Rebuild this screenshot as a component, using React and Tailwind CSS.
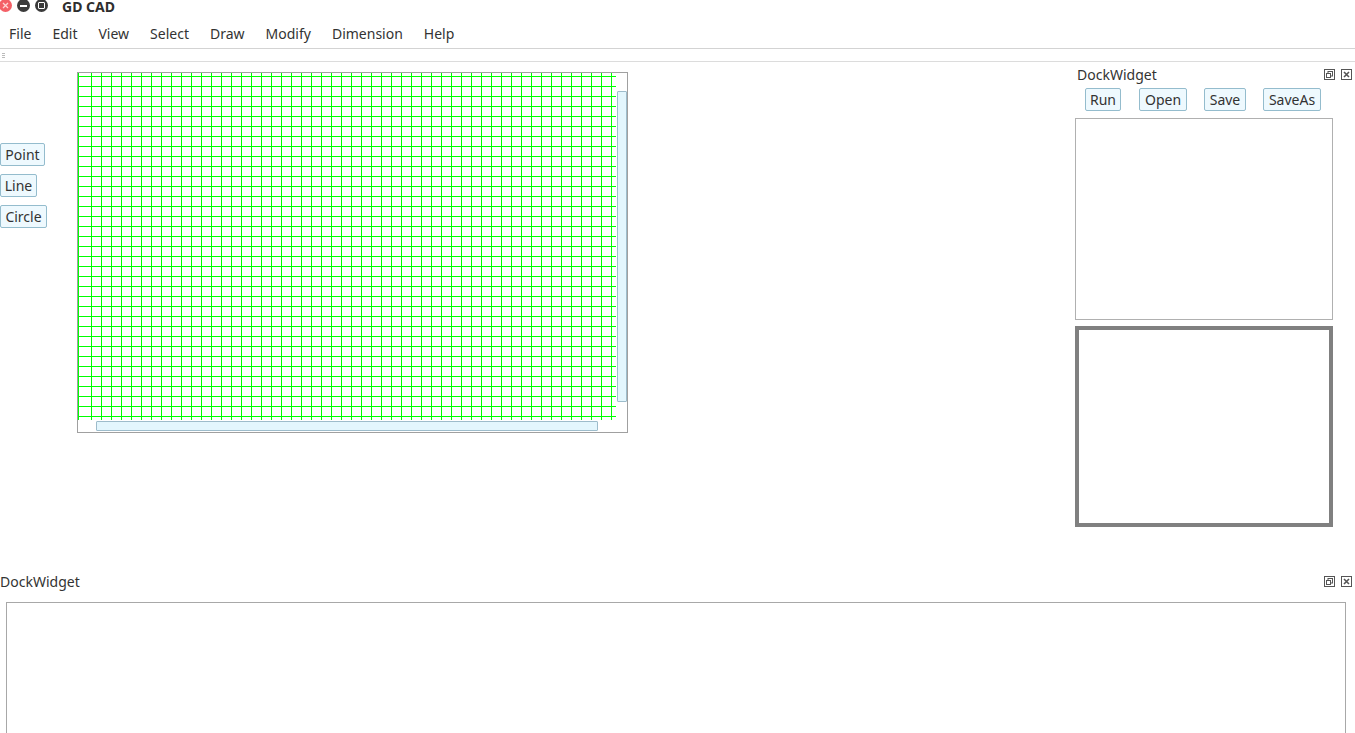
import React from 'react';

const menus = ['File', 'Edit', 'View', 'Select', 'Draw', 'Modify', 'Dimension', 'Help'];

const Btn = ({ children, className = '' }) => (
  <button className={`h-[23px] px-[3px] border border-[#94bccd] bg-[#eef9fe] rounded-[2px] text-[14px] leading-none text-[#333] ${className}`}>
    {children}
  </button>
);

const DockIcons = () => (
  <div className="flex gap-[6px] mr-[3px]">
    <svg width="11" height="11" viewBox="0 0 11 11" className="text-[#555]">
      <rect x="0.5" y="0.5" width="10" height="10" fill="none" stroke="currentColor" />
      <rect x="4" y="2.5" width="4.5" height="4.5" fill="none" stroke="currentColor" />
      <rect x="2.5" y="4.5" width="4" height="4" fill="white" stroke="currentColor" />
    </svg>
    <svg width="11" height="11" viewBox="0 0 11 11" className="text-[#555]">
      <rect x="0.5" y="0.5" width="10" height="10" fill="none" stroke="currentColor" />
      <path d="M3 3 L8 8 M8 3 L3 8" stroke="currentColor" strokeWidth="1.6" />
    </svg>
  </div>
);

// scene grid, first column sits against the frame, the rest every 10px
const Grid = () => {
  const cols = [0];
  for (let x = 13; x <= 533; x += 10) cols.push(x);
  const rows = [];
  for (let y = 3; y <= 343; y += 10) rows.push(y);
  return (
    <svg width="540" height="350" className="absolute left-0 top-0" shapeRendering="crispEdges">
      {cols.map((x) => (
        <line key={'c' + x} x1={x + 0.5} y1="0" x2={x + 0.5} y2="347" stroke="#00ff00" strokeWidth="1" />
      ))}
      {rows.map((y) => (
        <line key={'r' + y} x1="0" y1={y + 0.5} x2="538" y2={y + 0.5} stroke="#00ff00" strokeWidth="1" />
      ))}
    </svg>
  );
};

export default function App() {
  return (
    <div className="w-[1355px] h-[733px] overflow-hidden bg-white flex flex-col text-[#333]" style={{ fontFamily: '"Noto Sans", "Open Sans", sans-serif' }}>
      {/* title bar */}
      <div className="h-[15px] shrink-0 flex items-start">
        <div className="flex items-center gap-[5px] -ml-[1px] -mt-[1px]">
          <div className="w-[13px] h-[13px] rounded-full bg-[#f46067] flex items-center justify-center">
            <svg width="7" height="7" viewBox="0 0 7 7"><path d="M1 1 L6 6 M6 1 L1 6" stroke="#ffd6d6" strokeWidth="1.3" /></svg>
          </div>
          <div className="w-[13px] h-[13px] rounded-full bg-[#3b3b3b] flex items-center justify-center">
            <div className="w-[7px] h-[2px] bg-white" />
          </div>
          <div className="w-[13px] h-[13px] rounded-full bg-[#3b3b3b] flex items-center justify-center">
            <div className="w-[7px] h-[7px] border-[1.5px] border-white rounded-[1px]" />
          </div>
        </div>
        <div className="ml-[14px] font-bold text-[14px] leading-[14px] text-[#2e2e2e]">GD CAD</div>
      </div>

      {/* menu bar */}
      <div className="h-[34px] shrink-0 flex items-center pt-[4px] border-b border-[#d3d3d3]">
        {menus.map((m) => (
          <span key={m} className="px-[10.5px] first:pl-[9px] text-[14px] text-[#333]">{m}</span>
        ))}
      </div>

      {/* toolbar */}
      <div className="h-[13px] shrink-0 border-b border-[#dcdcdc] flex items-center pl-[2px]">
        <div className="flex flex-col gap-[1px]">
          <div className="w-[3px] h-[1px] bg-[#bbb]" />
          <div className="w-[3px] h-[1px] bg-[#bbb]" />
          <div className="w-[3px] h-[1px] bg-[#bbb]" />
        </div>
      </div>

      {/* main */}
      <div className="h-[508px] shrink-0 flex">
        <div className="w-[77px] flex flex-col items-start gap-[8px] pt-[81px]">
          <Btn className="w-[45px]">Point</Btn>
          <Btn className="w-[37px]">Line</Btn>
          <Btn className="w-[47px]">Circle</Btn>
        </div>
        <div className="mt-[10px] w-[551px] h-[361px] border border-[#a0a0a0] relative">
          <Grid />
          <div className="absolute left-[539px] top-[18px] w-[10px] h-[311px] bg-[#e3f6fd] border border-[#9dbccb] rounded-[1px]" />
          <div className="absolute left-[18px] top-[348px] w-[502px] h-[10px] bg-[#e3f6fd] border border-[#9dbccb] rounded-[1px]" />
        </div>
        <div className="flex-1" />
        <div className="w-[280px] flex flex-col">
          <div className="h-[24px] flex items-center justify-between pl-[2px]">
            <span className="text-[14px]">DockWidget</span>
            <DockIcons />
          </div>
          <div className="flex pl-[10px] gap-[17px] mt-[2px]">
            <Btn className="w-[36px] mr-[1px]">Run</Btn>
            <Btn className="w-[48px]">Open</Btn>
            <Btn className="w-[42px]">Save</Btn>
            <Btn className="w-[58px]">SaveAs</Btn>
          </div>
          <div className="mt-[7px] w-[258px] h-[202px] border border-[#b0b0b0]" />
          <div className="mt-[6px] w-[258px] h-[201px] border-4 border-[#808080]" />
        </div>
      </div>

      {/* bottom dock */}
      <div className="h-[22px] shrink-0 flex items-center justify-between">
        <span className="text-[14px]">DockWidget</span>
        <DockIcons />
      </div>
      <div className="flex-1 pl-[6px] pr-[9px] pt-[10px]">
        <div className="h-[200px] border border-[#a8a8a8]" />
      </div>
    </div>
  );
}
